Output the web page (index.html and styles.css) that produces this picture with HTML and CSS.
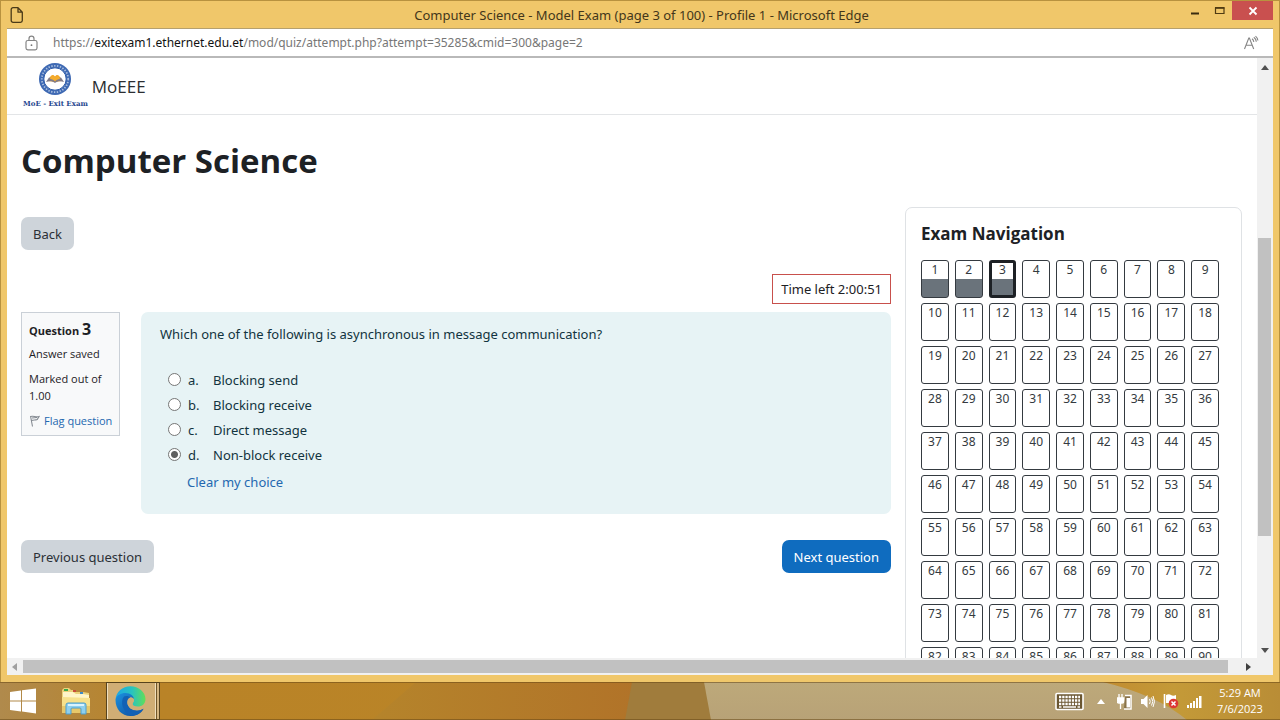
FILE: index.html
```html
<!DOCTYPE html>
<html lang="en">
<head>
<meta charset="utf-8">
<title>Computer Science - Model Exam (page 3 of 100)</title>
<link rel="stylesheet" href="styles.css">
</head>
<body>
<div class="window">
  <header class="titlebar">
    <svg class="doc-icon" width="14" height="18" viewBox="0 0 14 18" fill="none" stroke="#4a3a18" stroke-width="1.3" stroke-linejoin="round"><path d="M3 1.7h5l4.300 4.500v8.300a1.800 1.800 0 0 1-1.800 1.800H3a1.800 1.800 0 0 1-1.800-1.800V3.500A1.800 1.800 0 0 1 3 1.700zM8 1.700v4.500h4.300"/></svg>
    <span class="window-title">Computer Science - Model Exam (page 3 of 100) - Profile 1 - Microsoft Edge</span>
    <div class="window-buttons">
      <button class="win-btn" aria-label="Minimize"><svg width="10" height="10" viewBox="0 0 10 10"><path d="M1 6.500h8v2H1z" fill="#3b2c10"/></svg></button>
      <button class="win-btn" aria-label="Maximize"><svg width="12" height="10" viewBox="0 0 12 10"><path d="M1.500 2h8.500v5.500H1.500z" fill="none" stroke="#4f3b12" stroke-width="1.200"/><path d="M1 1h9.500v1.700H1z" fill="#4f3b12"/></svg></button>
      <button class="win-btn win-close" aria-label="Close"><svg width="10" height="10" viewBox="0 0 10 10" stroke="#fff" stroke-width="1.800"><path d="M1.500 1.500l7 7M8.500 1.500l-7 7"/></svg></button>
    </div>
  </header>
  <div class="addressbar">
    <svg width="13" height="16" viewBox="0 0 13 16" fill="none" stroke="#858585" stroke-width="1.200"><rect x="1" y="5.500" width="11" height="9.300" rx="1.800"/><path d="M4 5.500V3.700a2.500 2.500 0 0 1 5 0v1.800"/><circle cx="6.500" cy="10.200" r=".9" fill="#777" stroke="none"/></svg>
    <span class="url">https://<b>exitexam1.ethernet.edu.et</b>/mod/quiz/attempt.php?attempt=35285&amp;cmid=300&amp;page=2</span>
    <button class="read-aloud" aria-label="Read aloud"><svg width="16" height="16" viewBox="0 0 16 16" fill="none" stroke="#858585" stroke-width="1.100"><path d="M1.500 14L5.800 3h.6l4.300 11M3 10.300h6.200M9 3.800c1.100.7 1.700 1.800 1.800 3.200M10.800 2.200c1.500 1 2.300 2.500 2.500 4.500M12.500 1.200c1.400 1.200 2.200 2.600 2.400 4.300"/></svg></button>
  </div>
  <div class="viewport">
    <div class="page">
      <nav class="site-nav">
        <a class="brand" href="#">
          <span class="brand-logo">
            <svg width="34" height="34" viewBox="0 0 34 34"><circle cx="17" cy="17" r="16" fill="#3e69b3"/><circle cx="17" cy="17" r="13.200" fill="none" stroke="#a9bede" stroke-width="1.800" stroke-dasharray="1.400 1.500"/><circle cx="17" cy="17" r="11.200" fill="#fff" stroke="#2d5ba8"/><path d="M11.500 16c1.800-4 4.300-3.500 5.500-1.500 1.200-2 3.700-2.500 5.500 1.500l1 3-6.500 1-6.500-1z" fill="#f2a526"/><path d="M8 20l3-4.500c2.500 0 4.500 1 6 3 1.500-2 3.500-3 6-3l3 4.500c-3.500-1-6.500-1-9 1-2.500-2-5.500-2-9-1z" fill="#817b88"/><path d="M12 17c2 0 4 1 5 2.500 1-1.500 3-2.500 5-2.500-1-3-3-3.500-5-1.200-2-2.300-4-1.800-5 1.200z" fill="#f5ad2c"/></svg>
            <span class="logo-text">MoE - Exit Exam</span>
          </span>
          <span class="brand-name">MoEEE</span>
        </a>
      </nav>
      <h1 class="course-title">Computer Science</h1>
      <div class="columns">
        <main class="attempt">
          <button class="btn">Back</button>
          <div class="timer-row"><div class="timer" role="timer">Time left 2:00:51</div></div>
          <div class="question">
            <section class="info">
              <h2 class="question-no">Question <span>3</span></h2>
              <p>Answer saved</p>
              <p>Marked out of 1.00</p>
              <a class="flag" href="#"><svg width="11" height="12" viewBox="0 0 11 12" fill="none" stroke="#858b92" stroke-width="1.100"><path d="M1.500 1l2 10.500M1.500 1.500c3-1 5 .8 8.500 0L8.200 4.500C6 5.500 5 4.500 2.400 5.500M3 3l5-.5"/></svg>Flag question</a>
            </section>
            <form class="formulation">
              <fieldset class="answers">
                <legend>Which one of the following is asynchronous in message communication?</legend>
                <div class="answer"><input type="radio" name="answer" id="a"><label for="a"><span class="letter">a.</span>Blocking send</label></div>
                <div class="answer"><input type="radio" name="answer" id="b"><label for="b"><span class="letter">b.</span>Blocking receive</label></div>
                <div class="answer"><input type="radio" name="answer" id="c"><label for="c"><span class="letter">c.</span>Direct message</label></div>
                <div class="answer"><input type="radio" name="answer" id="d" checked><label for="d"><span class="letter">d.</span>Non-block receive</label></div>
              </fieldset>
              <a class="clear" href="#">Clear my choice</a>
            </form>
          </div>
          <div class="pager">
            <button class="btn">Previous question</button>
            <button class="btn btn-primary">Next question</button>
          </div>
        </main>
        <aside class="exam-nav">
          <h2>Exam Navigation</h2>
          <div class="question-grid" id="question-grid"></div>
        </aside>
      </div>
    </div>
    <div class="vscroll">
      <svg width="8" height="5" viewBox="0 0 8 5"><path d="M4 0l4 5H0z" fill="#505050"/></svg>
      <div class="vtrack"><div class="vthumb"></div></div>
      <svg width="8" height="5" viewBox="0 0 8 5"><path d="M4 5l4-5H0z" fill="#505050"/></svg>
    </div>
  </div>
  <div class="hscroll">
    <svg width="5" height="8" viewBox="0 0 5 8"><path d="M0 4l5-4v8z" fill="#a0a0a0"/></svg>
    <div class="hthumb"></div>
    <svg class="scroll-right" width="5" height="8" viewBox="0 0 5 8"><path d="M5 4L0 0v8z" fill="#404040"/></svg>
  </div>
</div>
<footer class="taskbar">
  <svg class="wallpaper" viewBox="0 0 1280 38" preserveAspectRatio="none">
    <defs>
      <linearGradient id="w1"><stop offset="0" stop-color="#b08a4c"/><stop offset=".12" stop-color="#b98327"/><stop offset="1" stop-color="#bb8728"/></linearGradient>
      <linearGradient id="w2"><stop offset="0" stop-color="#b5842b"/><stop offset="1" stop-color="#b06e28"/></linearGradient>
      <linearGradient id="w3" x2="0" y2="1"><stop offset="0" stop-color="#bda97a"/><stop offset="1" stop-color="#b8a277"/></linearGradient>
      <linearGradient id="w4"><stop offset="0" stop-color="#c18c31"/><stop offset=".4" stop-color="#c49a38"/><stop offset="1" stop-color="#b98d36"/></linearGradient>
    </defs>
    <path d="M0 0h1280v38H0z" fill="url(#w1)"/>
    <path d="M416 0h300v38H372z" fill="url(#w2)"/>
    <path d="M632 0h90v38h-97z" fill="#a07c3c"/>
    <path d="M704 0h576v38H711z" fill="url(#w3)"/>
    <path d="M1103 0h177v38h-93q-30-25-84-38z" fill="url(#w4)"/>
    <path d="M0 0h1280v1H0zM0 37h1280v1H0z" fill="#674817" opacity=".55"/>
  </svg>
  <div class="apps">
    <button class="app" aria-label="Start"><svg width="28" height="26" viewBox="0 0 28 26" fill="#fff"><path d="M1 4l11-1.500v10H1zM13 2.300L27 .5v12H13zM1 13.500h11v10L1 22zM13 13.500h14v12l-14-1.900z"/></svg></button>
    <button class="app" aria-label="File Explorer"><svg width="30" height="28" viewBox="0 0 30 28"><path d="M1 3l2-2h5l2 2h4l1 2h7l6 1v20H1z" fill="#ecd27a"/><path d="M2 5h10l3 2h7l6 1v3H2z" fill="#fff5c8"/><path d="M1 10l28 1v15H1z" fill="#f7e18c"/><path d="M1 19h28v7H1z" fill="#e8c869"/><path d="M3 2h4v2H3z" fill="#39a84b"/><path d="M12 3h3v2h-3z" fill="#c94c3a"/><path d="M19 5h3v2h-3z" fill="#3e8bc7"/><path d="M5 27V18q0-2 2-2h16q2 0 2 2v9h-5v-5q0-1-1-1h-8q-1 0-1 1v5z" fill="#8fd0ee" stroke="#4f9ecb"/><path d="M7 18h16" stroke="#d9f3ff" stroke-width="2"/></svg></button>
    <button class="app app-active" aria-label="Microsoft Edge"><svg width="31" height="30" viewBox="0 0 31 30"><defs><linearGradient id="e1" x1="0" x2="1"><stop offset="0" stop-color="#1ca5e6"/><stop offset=".55" stop-color="#29c3bf"/><stop offset="1" stop-color="#60df57"/></linearGradient><linearGradient id="e2" x1="0" y1="0" x2="1" y2="1"><stop offset="0" stop-color="#1b91df"/><stop offset="1" stop-color="#0e4999"/></linearGradient></defs><path d="M.5 14C1 5.500 7.500.2 15.500.2S30.500 6 30.500 13c0 5-3.500 7.500-7.500 7.500-3.500 0-5.500-1.300-5.500-2.500s1.500-1.800 1.500-4.200c0-2.500-2.500-4.300-5.500-4.300C8 9.500 1.500 11 .5 14z" fill="url(#e1)"/><path d="M.5 14C1.500 9 6 7 10.500 7c5 0 8.500 3 8.500 6.500 0 0-1.300-2-3-2-2.500 0-3.700 2.500-3.700 5.200 0 5 5 8 9.700 8 2.500 0 4.500-.8 6.500-2C26 27.500 21 30 15.500 30 6.500 30 .5 23 .5 14z" fill="url(#e2)"/><path d="M9 10.500c-4 5-2 15.500 7.500 19.400 5-.1 9.500-3 12-7.200-2 1.200-4 2-6.500 2-4.700 0-9.700-3-9.700-8 0-2.700 1.200-5.200 3.700-5.200-2-1.500-5-2-7-1z" fill="#1261b5"/><path d="M12.300 16.700c0-2.700 1.200-5.200 3.700-5.200 1.700 0 3 1 3 2.300 0 2.400-1.500 3-1.500 4.200 0 1.800 2.500 3.500 6 3.500-5 1.500-11.200-.3-11.200-4.800z" fill="#d0ae75"/></svg></button>
  </div>
  <div class="tray">
    <svg width="29" height="19" viewBox="0 0 29 19"><rect x="1" y="1.500" width="27" height="16" rx="1" fill="#6a5631" stroke="#fff" stroke-width="1.600"/><path d="M4 5h21M4 8.500h21M4 12h21" stroke="#fff" stroke-width="2.300" stroke-dasharray="2.300 .9"/><path d="M4 15h2.500M8 15h13M22.500 15H25" stroke="#fff" stroke-width="1.500"/></svg>
    <svg width="8" height="5" viewBox="0 0 8 5"><path d="M4 0l4 5H0z" fill="#fff"/></svg>
    <svg width="15" height="17" viewBox="0 0 15 17"><path d="M2 1v4M5 1v4M0 5h7v3q0 2-2 2H2q-2 0-2-2zM3.500 10v6" fill="#fff" stroke="#fff" stroke-width="1.300"/><path d="M8 2.500h6V16H7" fill="#89734a" stroke="#fff" stroke-width="1.500"/><path d="M9.500 5H13v9.500H9.500z" fill="#fff"/></svg>
    <svg width="15" height="15" viewBox="0 0 15 15"><path d="M1 5h2.500L7.500 1v13l-4-4H1z" fill="#fff"/><path d="M9.500 5q1.500 2.500 0 5M11.500 3.500q2.600 4 0 8M13 2q3 5.500 0 11" fill="none" stroke="#fff"/></svg>
    <svg width="16" height="16" viewBox="0 0 16 16"><path d="M1.500 1v14" stroke="#fff" stroke-width="1.600"/><path d="M3 2q3-1.500 5 0t5 0v8H3z" fill="#fff"/><circle cx="10.500" cy="10.500" r="4.800" fill="#dc3834"/><path d="M8.500 8.500l4 4M12.500 8.500l-4 4" stroke="#fff" stroke-width="1.500"/></svg>
    <svg width="15" height="13" viewBox="0 0 15 13" fill="#fff"><path d="M0 10h2v3H0zM3 8h2v5H3zM6 6h2v7H6zM9 3h2v10H9zM12 1h2.500v12H12z"/></svg>
    <div class="clock"><span>5:29 AM</span><span>7/6/2023</span></div>
  </div>
</footer>
<script src="script.js"></script>
</body>
</html>
```
FILE: styles.css
```css
* { box-sizing: border-box; }
body {
  margin: 0;
  height: 100vh;
  display: flex;
  flex-direction: column;
  overflow: hidden;
  font-family: "Noto Sans", "Open Sans", sans-serif;
  font-size: 13px;
  color: #1d2125;
}
a { color: #2468b0; text-decoration: none; }
button { font: inherit; border: 0; padding: 0; background: none; color: inherit; }
svg { display: block; flex: none; }
h1, h2, p { margin: 0; }

.window {
  flex: 1;
  min-height: 0;
  display: flex;
  flex-direction: column;
  padding: 0 6px 7px;
  background: #f0c76a;
  border: 1px solid #b8923f;
  border-bottom: 0;
}
.titlebar {
  height: 28px;
  flex: none;
  display: grid;
  grid-template-columns: 1fr auto 1fr;
  align-items: center;
  padding-left: 3px;
  color: #43361a;
  border-bottom: 1px solid #b5a06e;
}
.window-buttons { display: flex; justify-content: flex-end; align-self: start; }
.win-btn { width: 25px; height: 19px; display: grid; place-items: center; }
.win-close { width: 41px; background: #c9504f; }
.addressbar {
  height: 29px;
  flex: none;
  display: flex;
  align-items: center;
  gap: 15px;
  padding: 0 14px 0 18px;
  background: #fff;
  border-bottom: 2px solid #b9b9b9;
  font-size: 12px;
  color: #777;
}
.url b { font-weight: 400; color: #111; }
.read-aloud { margin-left: auto; }

.viewport { flex: 1; min-height: 0; display: flex; background: #fff; }
.page { flex: 1; min-width: 0; overflow: hidden; }
.site-nav { height: 57px; border-bottom: 1px solid #e3e5e7; padding: 4px 16px 0; }
.brand { display: flex; gap: 4px; color: #2b2e31; }
.brand-logo { display: flex; flex-direction: column; align-items: center; }
.logo-text {
  font-family: "DejaVu Serif", serif;
  font-size: 7px;
  line-height: 15px;
  font-weight: 700;
  color: #27478f;
}
.brand-name { font-family: "Open Sans", sans-serif; font-size: 17px; line-height: 50px; }
.course-title {
  padding: 21px 14px;
  font-family: "Open Sans", sans-serif;
  font-size: 33px;
  line-height: 50px;
  font-weight: 700;
}
.columns { display: flex; gap: 14px; padding: 0 15px 0 14px; }
.attempt { flex: 1; min-width: 0; padding-top: 10px; }

.btn {
  height: 33px;
  padding: 0 12px;
  border-radius: 7px;
  background: #ced4da;
  color: #2b3036;
}
.btn-primary { background: #0f6cbf; color: #fff; }
.timer-row { display: flex; justify-content: flex-end; margin: 24px 0 8px; }
.timer { height: 30px; padding: 0 8px; border: 1px solid #c8504c; line-height: 28px; }
.question { display: flex; gap: 21px; align-items: flex-start; }
.info {
  width: 99px;
  flex: none;
  padding: 6px 7px;
  background: #f8f9fa;
  border: 1px solid #cad0d7;
  font-family: "Open Sans", sans-serif;
  font-size: 11px;
  line-height: 17px;
}
.question-no { font-size: 11px; line-height: 20px; }
.question-no span { font-size: 16px; }
.info p { margin: 4px 0 8px; }
.flag { display: flex; align-items: center; gap: 4px; white-space: nowrap; }
.formulation {
  flex: 1;
  min-height: 202px;
  padding: 11px 19px;
  border-radius: 7px;
  background: #e7f3f5;
  color: #123340;
}
.answers { border: 0; margin: 0; padding: 0; }
.answers legend { padding: 0; line-height: 22px; margin-bottom: 22px; }
.answer { display: flex; align-items: center; height: 25px; padding-left: 8px; }
.answer input {
  appearance: none;
  width: 13px;
  height: 13px;
  margin: 0 7px 0 0;
  border: 1px solid #767676;
  border-radius: 50%;
  background: #fff;
}
.answer input:checked { background: radial-gradient(circle, #606060 3px, #fff 4px); }
.answer label { display: flex; }
.letter { width: 25px; }
.clear { display: inline-block; padding-left: 27px; line-height: 30px; }
.pager { display: flex; justify-content: space-between; margin-top: 26px; }

.exam-nav {
  width: 337px;
  flex: none;
  padding: 15px;
  border: 1px solid #dfe2e5;
  border-radius: 7px;
}
.exam-nav h2 { font-family: "Open Sans", sans-serif; font-size: 17px; line-height: 22px; margin-bottom: 15px; }
.question-grid { display: grid; grid-template-columns: repeat(9, 1fr); gap: 5px 6px; padding-right: 7px; }
.cell {
  height: 38px;
  border: 1px solid #343a40;
  border-radius: 3px;
  text-align: center;
  font-size: 12px;
  line-height: 18px;
  color: #343a40;
}
.cell.saved { background: linear-gradient(#fff 50%, #6a737b 50%); }
.cell.current { border: 3px solid #1d2125; line-height: 14px; }

.vscroll {
  width: 16px;
  flex: none;
  display: flex;
  flex-direction: column;
  align-items: center;
  padding: 7px 0 5px;
  background: #f1f1f1;
}
.vtrack { flex: 1; align-self: stretch; padding: 168px 2px 0 1px; }
.vthumb { height: 298px; background: #c1c1c1; }
.hscroll {
  height: 17px;
  flex: none;
  display: flex;
  align-items: center;
  padding: 0 22px 0 5px;
  background: #f1f1f1;
}
.hthumb { flex: 1; height: 13px; margin: 0 18px 0 6px; background: #c1c1c1; }

.taskbar {
  height: 38px;
  flex: none;
  position: relative;
  display: flex;
  justify-content: space-between;
}
.wallpaper { position: absolute; inset: 0; width: 100%; height: 100%; }
.apps, .tray { position: relative; display: flex; align-items: center; }
.apps { padding-left: 9px; }
.app { height: 38px; width: 28px; display: grid; place-items: center; }
.app + .app { margin-left: 23px; width: 31px; }
.app + .app-active {
  width: 54px;
  margin-left: 15px;
  padding-right: 5px;
  border: 1px solid #57431d;
  background: linear-gradient(90deg, #f0dfbd 1px, #d0ae75 1px 48px, #f0dfbd 48px 49px, #6f5628 49px 50px, #d5b682 50px);
}
.tray { gap: 8px; padding-right: 14px; }
.tray svg:first-child { margin-right: 5px; }
.tray svg:nth-child(2) { margin-right: 4px; }
.clock {
  width: 52px;
  margin-left: 4px;
  display: flex;
  flex-direction: column;
  align-items: center;
  font-family: "Open Sans", sans-serif;
  font-size: 11px;
  line-height: 16px;
  color: #fff;
}
```
FILE: script.js
```js
const grid = document.getElementById("question-grid");
for (let n = 1; n <= 100; n++) {
  const cell = document.createElement("a");
  cell.href = "#";
  cell.className = "cell" + (n <= 3 ? " saved" : "") + (n === 3 ? " current" : "");
  cell.textContent = n;
  grid.append(cell);
}
```
